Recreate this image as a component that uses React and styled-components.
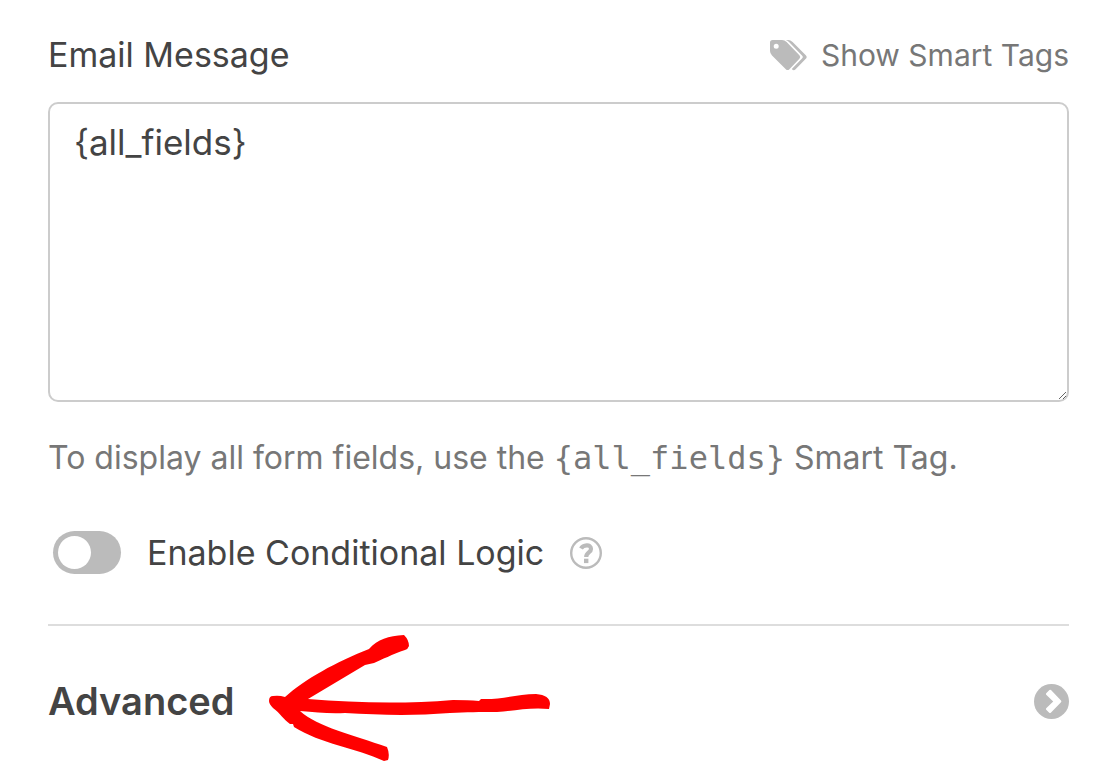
import React, { useState } from 'react';
import styled, { createGlobalStyle } from 'styled-components';

const TagsIcon = () => (
  <svg width="37" height="31" viewBox="0 0 37 31" fill="currentColor" aria-hidden="true">
    <path
      fillRule="evenodd"
      d="M2.6 0H12Q14.6 0 16.6 2L29.4 15.2Q31.2 17 29.4 18.8L19.4 29.2Q17.6 31 15.8 29.2L2 15.4Q0 13.4 0 11V2.6Q0 0 2.6 0ZM6.2 3.8A2.5 2.5 0 1 0 6.2 8.8A2.5 2.5 0 1 0 6.2 3.8Z"
    />
    <path d="M15.8 0H18Q20.6 0 22.6 2L35.8 15.2Q37.6 17 35.8 18.8L25.6 29.2Q23.8 31 22.2 29.4L21.8 29L32 18.6Q33.6 17 32 15.4L19 2Q17.6 .6 15.8 0Z" />
  </svg>
);

const HelpIcon = () => (
  <svg width="32" height="32" viewBox="0 0 32 32" fill="none" stroke="currentColor" aria-hidden="true">
    <circle cx="16" cy="16" r="14.8" strokeWidth="2.4" />
    <path d="M11 11.6C13 8 21 6.6 21 11.9C21 15.6 16.2 15.2 16.2 19.9" strokeWidth="4.2" />
    <path d="M14 23.9H18.4" strokeWidth="4.4" />
  </svg>
);

const ChevronIcon = () => (
  <svg width="35" height="35" viewBox="0 0 35 35" aria-hidden="true">
    <circle cx="17.5" cy="17.5" r="17.5" fill="currentColor" />
    <path
      d="M12.2 9.2L15.4 6Q16.2 5.4 17 6L27 16.4Q27.8 17.3 27 18.2L16.8 28.8Q16 29.4 15.2 28.8L12.2 25.8Q11.6 25 12.2 24.2L19.2 17.4L12.2 10.8Q11.6 10 12.2 9.2Z"
      fill="#fff"
    />
  </svg>
);

const App = () => {
  const [message, setMessage] = useState('{all_fields}');
  const [conditional, setConditional] = useState(false);

  return (
    <Panel>
      <GlobalStyle />
      <FieldHeader>
        <Label htmlFor="email-message">Email Message</Label>
        <SmartTags type="button">
          <TagsIcon />
          Show Smart Tags
        </SmartTags>
      </FieldHeader>
      <Message
        id="email-message"
        value={message}
        onChange={e => setMessage(e.target.value)}
      />
      <Note>
        To display all form fields, use the <code>{'{all_fields}'}</code> Smart Tag.
      </Note>
      <ToggleRow>
        <Toggle
          id="conditional-logic"
          type="checkbox"
          role="switch"
          checked={conditional}
          onChange={e => setConditional(e.target.checked)}
        />
        <Label htmlFor="conditional-logic">Enable Conditional Logic</Label>
        <Help type="button" aria-label="Help">
          <HelpIcon />
        </Help>
      </ToggleRow>
      <Section>
        <SectionButton type="button">
          Advanced
          <ChevronIcon />
        </SectionButton>
        <Arrow viewBox="0 1 300 145" aria-hidden="true">
          <path d="M25 72 C45 54 76 37 109 24 C118 14 128 11 144 10 Q149 15 149 21 Q148 24 145 25 C133 29 121 35 114 38 L105 40 L48 74 C96 78 145 79 193 75 Q208 75 219 76 L221 74 C240 75 257 69 276 69 Q290 70 290 79 L289 84 C270 82 253 86 237 87 C219 87 207 87 190 88 C153 91 119 90 85 88 C68 89 56 87 40 86 C58 102 93 110 127 122 Q130 129 128 135 L124 136 C96 123 61 119 34 102 L33 99 L30 99 C24 95 20 88 13 83 Q9 79 9 76 Q9 71 13 71 Q19 70 25 72 Z" />
        </Arrow>
      </Section>
    </Panel>
  );
};

const GlobalStyle = createGlobalStyle`
  * {
    box-sizing: border-box;
  }

  body {
    margin: 0;
    background: #fff;
    color: #444;
    font-family: Inter, 'Liberation Sans', sans-serif;
    font-size: 34px;
    line-height: 40px;
  }

  button {
    padding: 0;
    border: none;
    background: none;
    font: inherit;
    cursor: pointer;
  }
`;

const Panel = styled.main`
  padding: 35px 47px 0 48px;
`;

const FieldHeader = styled.div`
  display: flex;
  align-items: center;
  justify-content: space-between;
  margin-bottom: 27px;
`;

const Label = styled.label`
  font-size: 34px;
`;

const SmartTags = styled.button`
  display: flex;
  align-items: center;
  gap: 14px;
  color: #777;
  font-size: 30px;

  svg {
    color: #bbb;
  }
`;

const Message = styled.textarea`
  display: block;
  width: 100%;
  height: 300px;
  padding: 18px 24px;
  border: 2px solid #ccc;
  border-radius: 10px;
  outline: none;
  background: #fff;
  color: #444;
  font: inherit;
  font-size: 35px;
  resize: vertical;
`;

const Note = styled.p`
  margin: 36px 0 0;
  color: #777;
  font-size: 32px;

  code {
    font-family: 'DejaVu Sans Mono', monospace;
    font-size: 32px;
  }
`;

const ToggleRow = styled.div`
  display: flex;
  align-items: center;
  padding: 53px 0 50px 5px;
`;

const Toggle = styled.input`
  appearance: none;
  width: 68px;
  height: 43px;
  margin: 0 26px 0 0;
  padding: 5px;
  border-radius: 22px;
  background: #bbb;
  cursor: pointer;

  &::before {
    content: '';
    display: block;
    width: 33px;
    height: 33px;
    border-radius: 50%;
    background: #fff;
  }

  &:checked {
    background: #009cff;
  }

  &:checked::before {
    margin-left: auto;
  }
`;

const Help = styled.button`
  display: flex;
  margin-left: 26px;
  color: #bbb;
`;

const Section = styled.section`
  position: relative;
  border-top: 2px solid #ddd;
`;

const SectionButton = styled.button`
  display: flex;
  align-items: center;
  justify-content: space-between;
  width: 100%;
  padding: 55px 0 50px;
  color: #444;
  font-size: 38px;
  font-weight: 600;

  svg {
    color: #bbb;
  }
`;

// hand drawn pointer laid over the section heading
const Arrow = styled.svg`
  position: absolute;
  top: 0;
  left: 212px;
  width: 300px;
  height: 145px;
  fill: #f00;
  pointer-events: none;
`;

export default App;
